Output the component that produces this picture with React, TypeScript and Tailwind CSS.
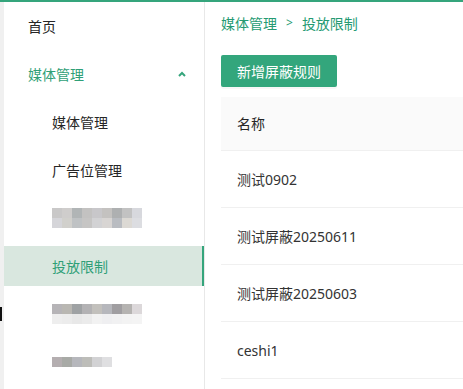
import React from "react";

const font = { fontFamily: '"Noto Sans", "Noto Sans CJK SC", sans-serif' };

function Pixels({ rows }: { rows: string[][] }) {
  return (
    <div className="flex flex-col">
      {rows.map((r, i) => (
        <div key={i} className="flex">
          {r.map((c, j) => (
            <div key={j} className="w-[10px] h-[10px]" style={{ background: c }} />
          ))}
        </div>
      ))}
    </div>
  );
}

function Item({
  children,
  sub,
  active,
  green,
  right,
}: {
  children: React.ReactNode;
  sub?: boolean;
  active?: boolean;
  green?: boolean;
  right?: React.ReactNode;
}) {
  return (
    <div
      className={
        "relative h-[40px] shrink-0 flex items-center text-[14px] " +
        (sub ? "pl-[48px] " : "pl-[24px] ") +
        (active ? "bg-[#d9e7df] text-[#2f9f77] " : green ? "text-[#2f9f77] " : "text-[#262626] ")
      }
    >
      {children}
      {right}
      {active && <div className="absolute right-0 top-0 bottom-0 w-[2px] bg-[#35a57c]" />}
    </div>
  );
}

export default function App() {
  const rows = ["测试0902", "测试屏蔽20250611", "测试屏蔽20250603", "ceshi1"];
  return (
    <div className="w-[463px] h-[389px] overflow-hidden bg-white relative" style={font}>
      <div className="h-[2px] bg-[#35a57c]" />
      <div className="flex h-[387px]">
        <div className="w-[4px] bg-[#f0f0f0]" />
        <div className="w-[201px] border-r border-[#e8e8e8] bg-white shrink-0 flex flex-col pt-[4px] gap-[8px]">
          <Item>首页</Item>
          <Item
            green
            right={
              <svg className="absolute left-[174px] top-[17px]" width="8" height="6" viewBox="0 0 8 6">
                <path d="M1 5 L4 2 L7 5" stroke="#35a57c" strokeWidth="2" fill="none" />
              </svg>
            }
          >
            媒体管理
          </Item>
          <Item sub>媒体管理</Item>
          <Item sub>广告位管理</Item>
          <Item sub>
            <Pixels
              rows={[
                ["#c9c8c8", "#cfcdcc", "#b1b5b6", "#c3c2c1", "#c8c7ca", "#c4c2c0", "#aeb0b1", "#c2c2c2", "#d7d8dd"],
                ["#d5d5d9", "#d1d0cc", "#bfc2c4", "#c6c5c4", "#d2d2d4", "#d8d5d3", "#b9bcc1", "#dcd9d4", "#dcdde1"],
              ]}
            />
          </Item>
          <Item sub active>
            投放限制
          </Item>
          <Item sub>
            <Pixels
              rows={[
                ["#b6b4b7", "#b9b7b2", "#9fa2a4", "#b3b2b4", "#c2c0bc", "#b6b7bc", "#a09ea1", "#b5b3b1", "#dcd8da"],
                ["#eeeeee", "#ececec", "#e8e8e8", "#ebebeb", "#f2f2f2", "#efeff1", "#f1f1f2", "#f3f3f3", "#f4f4f4"],
              ]}
            />
          </Item>
          <Item sub>
            <Pixels rows={[["#b4aeb0", "#a8aaa6", "#b6b7bc", "#bdbdb9", "#d2d2d4", "#dfdfe1"]]} />
          </Item>
        </div>
        <div className="flex-1 pl-[16px] flex flex-col min-w-0">
          <div className="h-[42px] flex items-center text-[14px] text-[#259a72]">
            <span>媒体管理</span>
            <span className="mx-[9px] text-[12px]">&gt;</span>
            <span>投放限制</span>
          </div>
          <div className="mt-[11px]">
            <button className="h-[32px] w-[116px] rounded-[2px] bg-[#33a67c] text-white text-[14px] flex items-center justify-center shadow-[0_2px_0_rgba(0,0,0,0.03)]">
              新增屏蔽规则
            </button>
          </div>
          <div className="mt-[10px] w-[300px]">
            <div className="h-[54px] bg-[#fafafa] border-b border-[#f0f0f0] flex items-center pl-[16px] text-[14px] text-[#262626]">
              名称
            </div>
            {rows.map((r) => (
              <div
                key={r}
                className="h-[57px] border-b border-[#f0f0f0] flex items-center pl-[16px] text-[14px] text-[#333333]"
              >
                {r}
              </div>
            ))}
          </div>
        </div>
      </div>
      <div className="absolute left-0 top-[307px] w-[2px] h-[14px] bg-[#111111]" />
    </div>
  );
}
